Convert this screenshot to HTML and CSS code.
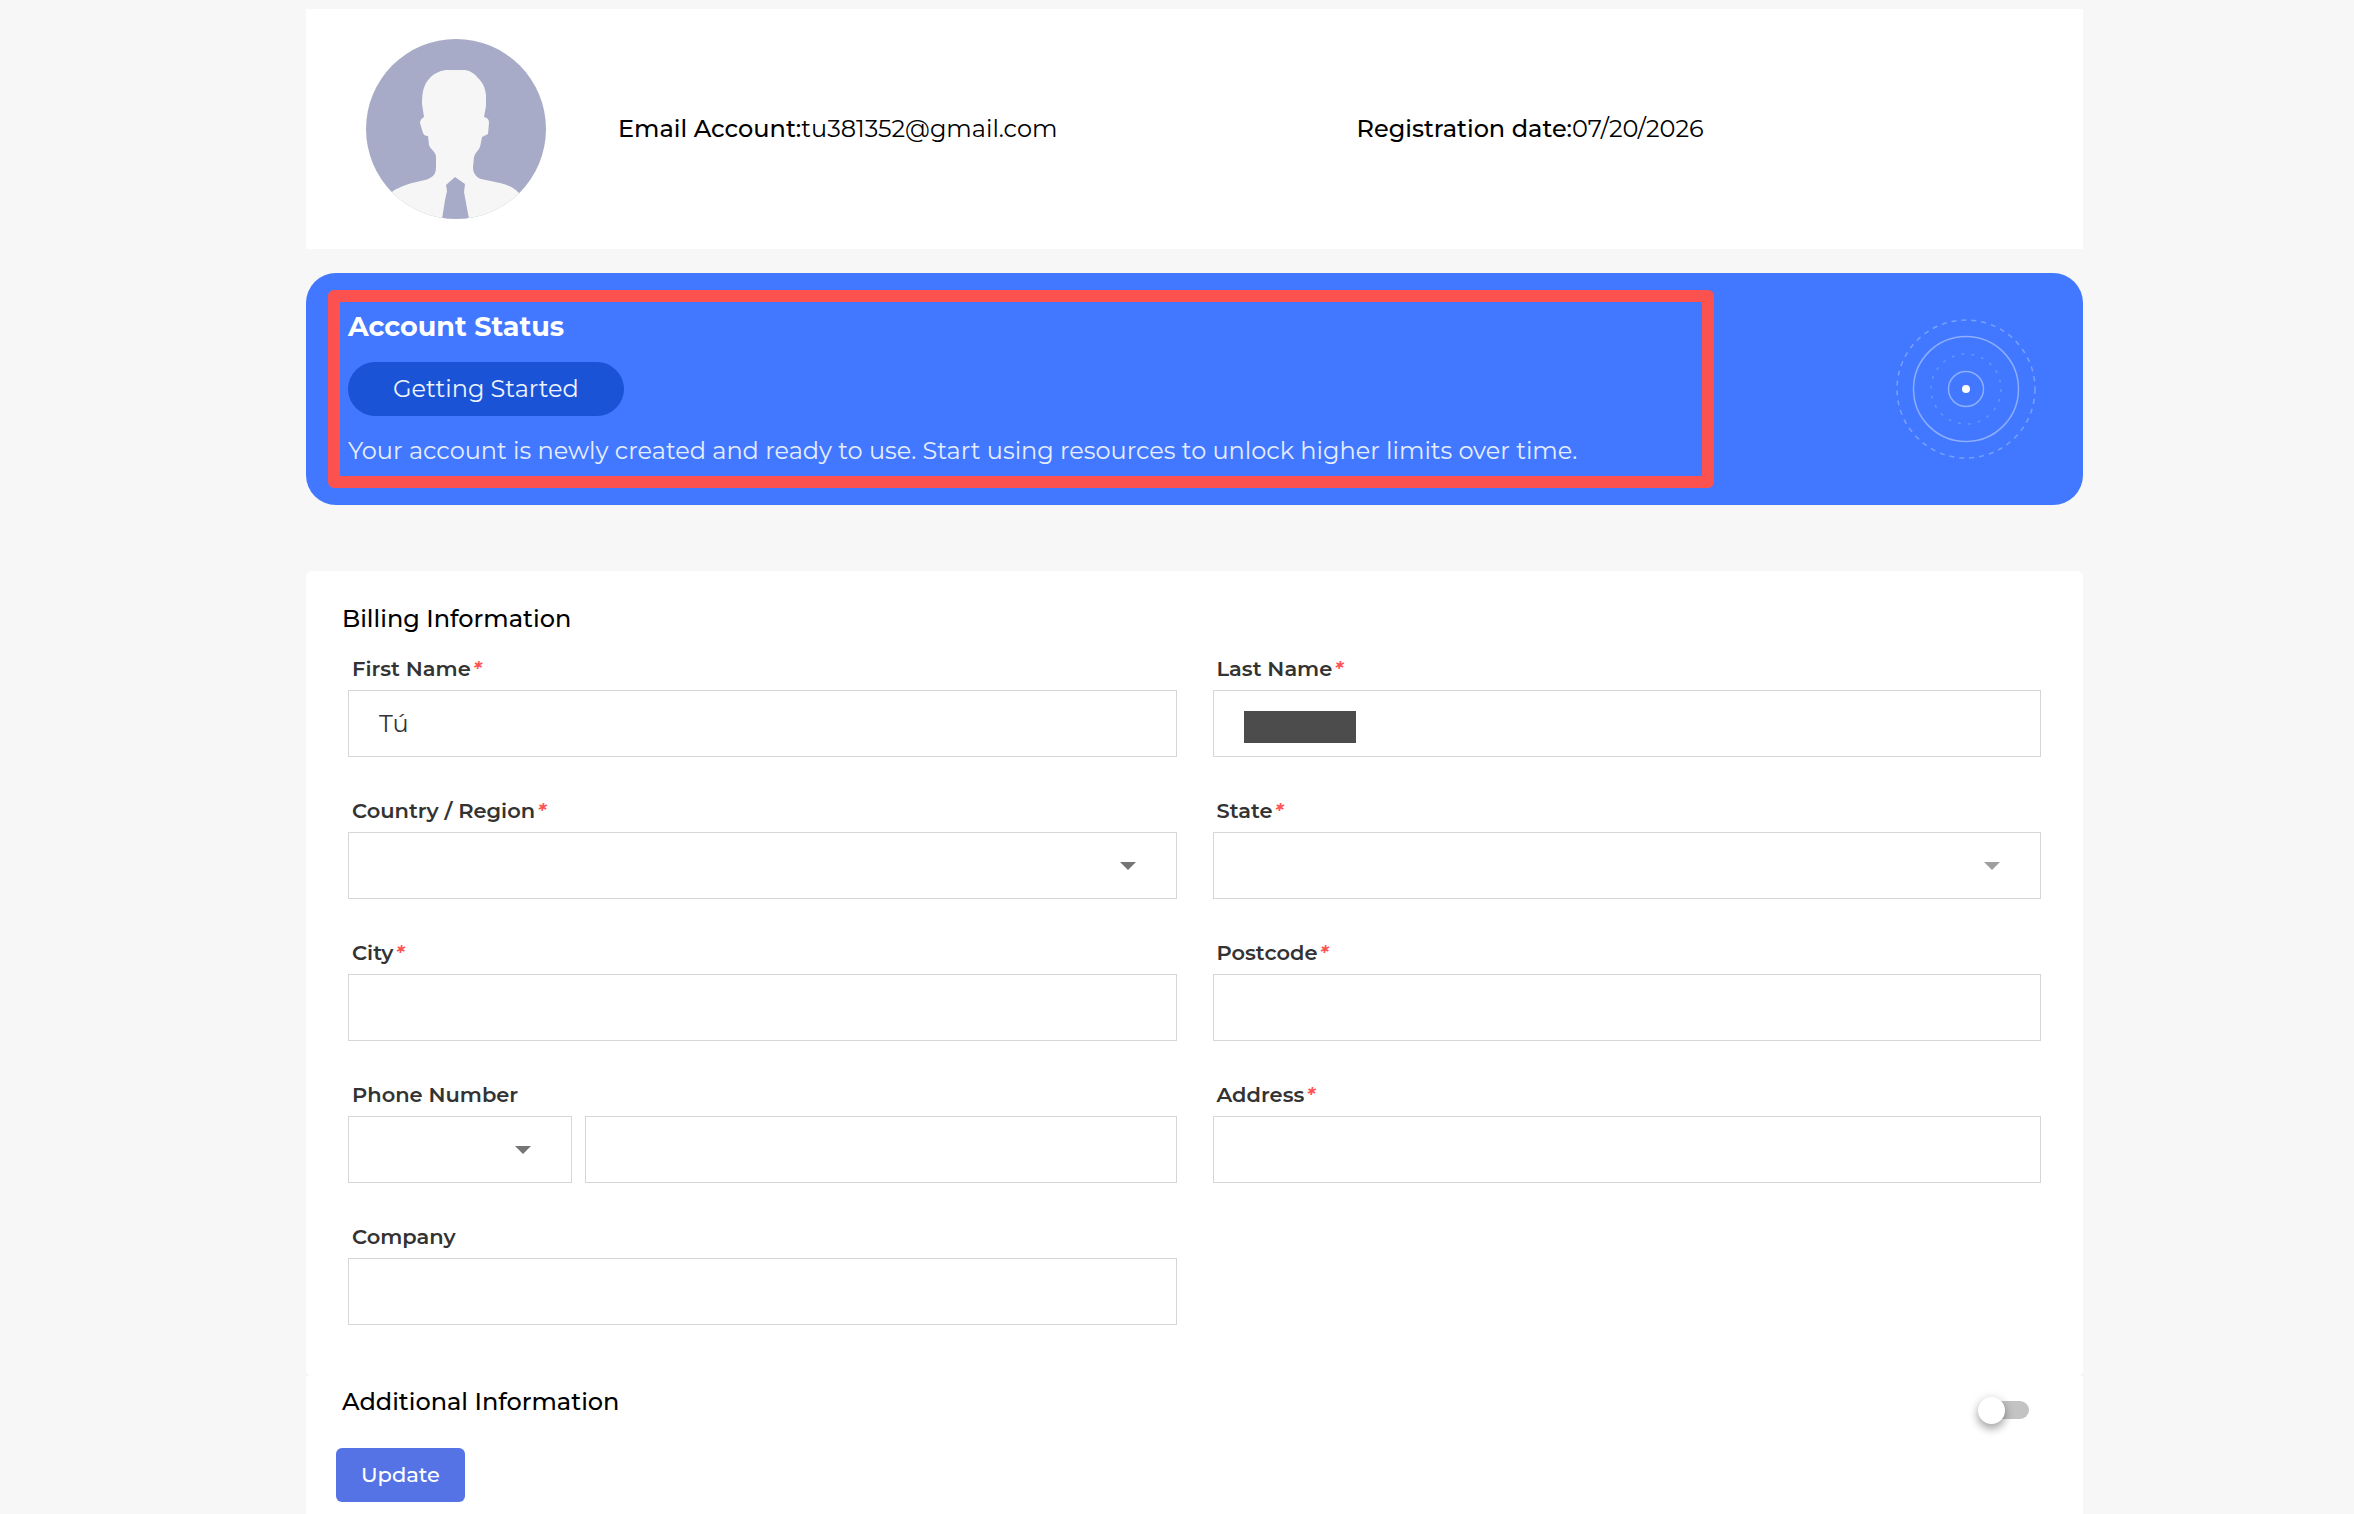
FILE: index.html
```html
<!DOCTYPE html>
<html lang="en">
<head>
    <meta charset="UTF-8">
    <meta name="viewport" content="width=device-width, initial-scale=1.0">
    <title>Account Profile</title>
    <link rel="stylesheet" href="styles.css">
</head>
<body>
    <main class="page">
        <section class="profile">
            <svg class="avatar" viewBox="0 0 180 180" role="img" aria-label="Avatar">
                <clipPath id="avatarClip"><circle cx="90" cy="90" r="90"/></clipPath>
                <g clip-path="url(#avatarClip)">
                    <rect width="180" height="180" fill="#a8abc7"/>
                    <path fill="#f6f6f6" d="M80 31H99C105 32 109 35 112 39C117 44 119 48 120 56L120 67L118 78C122 79 123 81 123 84L122 95L116 98L114 108C112 112 109 114 108 118L107 128C107 134 110 138 115 140L134 144C142 146 148 149 152 153L180 180H0L26 153C31 149 37 147 46 144L59 141C67 139 70 135 70 128V117C69 112 65 111 63 106L62 97C59 97 58 96 57 94L54 84C54 81 56 79 58 78L56 65C56 52 58 45 64 39C67 35 73 32 80 31Z"/>
                    <path fill="#a8abc7" d="M89 138L99 145L98 153L103 180H76L79 161L81 152L80 146Z"/>
                </g>
            </svg>
            <div class="profile-info">
                <p><span class="info-label">Email Account:</span>tu381352@gmail.com</p>
                <p><span class="info-label">Registration date:</span>07/20/2026</p>
            </div>
        </section>

        <section class="status">
            <div class="status-text">
                <h2>Account Status</h2>
                <span class="badge">Getting Started</span>
                <p>Your account is newly created and ready to use. Start using resources to unlock higher limits over time.</p>
            </div>
            <svg class="radar" viewBox="-72 -72 144 144" fill="none" stroke="#fff" aria-hidden="true">
                <circle r="69" stroke-opacity="0.3" stroke-width="1.5" stroke-dasharray="5 5"/>
                <circle r="52.5" stroke-opacity="0.4" stroke-width="1.5"/>
                <circle r="35" stroke-opacity="0.2" stroke-width="1.5" stroke-dasharray="3 7"/>
                <circle r="17.5" stroke-opacity="0.4" stroke-width="1.5"/>
                <circle r="4" fill="#fff" stroke="none"/>
            </svg>
            <div class="highlight"></div>
        </section>

        <form>
            <section class="billing">
                <h3>Billing Information</h3>
                <div class="fields">
                    <div class="field">
                        <label for="firstName">First Name<em>*</em></label>
                        <input type="text" id="firstName" value="Tú">
                    </div>
                    <div class="field">
                        <label for="lastName">Last Name<em>*</em></label>
                        <div class="control">
                            <input type="text" id="lastName">
                            <span class="mask"></span>
                        </div>
                    </div>
                    <div class="field">
                        <label for="country">Country / Region<em>*</em></label>
                        <div class="control select">
                            <select id="country"><option></option></select>
                        </div>
                    </div>
                    <div class="field">
                        <label for="state">State<em>*</em></label>
                        <div class="control select disabled">
                            <select id="state" disabled><option></option></select>
                        </div>
                    </div>
                    <div class="field">
                        <label for="city">City<em>*</em></label>
                        <input type="text" id="city">
                    </div>
                    <div class="field">
                        <label for="postcode">Postcode<em>*</em></label>
                        <input type="text" id="postcode">
                    </div>
                    <div class="field">
                        <label for="phone">Phone Number</label>
                        <div class="phone">
                            <div class="control select">
                                <select aria-label="Phone code"><option></option></select>
                            </div>
                            <input type="tel" id="phone">
                        </div>
                    </div>
                    <div class="field">
                        <label for="address">Address<em>*</em></label>
                        <input type="text" id="address">
                    </div>
                    <div class="field">
                        <label for="company">Company</label>
                        <input type="text" id="company">
                    </div>
                </div>
            </section>

            <section class="additional">
                <div class="additional-head">
                    <h3><label for="additional">Additional Information</label></h3>
                    <input type="checkbox" class="toggle" id="additional">
                </div>
                <button type="button">Update</button>
            </section>
        </form>
    </main>
</body>
</html>
```

FILE: styles.css
```css
* {
    box-sizing: border-box;
}

body {
    margin: 0;
    background-color: #f7f7f7;
    font-family: Montserrat, Inter, sans-serif;
    font-size: 24px;
    line-height: 30px;
    color: #000;
}

h2, h3, p {
    margin: 0;
}

.page {
    padding: 9px 271px 0 306px;
}

.profile {
    display: flex;
    align-items: center;
    gap: 72px;
    padding: 30px 0 30px 60px;
    background-color: #fff;
}

.avatar {
    width: 180px;
    height: 180px;
    flex-shrink: 0;
}

.profile-info {
    flex: 1;
    display: grid;
    grid-template-columns: 1fr 1fr;
    gap: 12px;
}

.info-label {
    font-weight: 500;
}

.status {
    position: relative;
    display: flex;
    justify-content: space-between;
    align-items: center;
    margin-top: 24px;
    padding: 38px 45px 39px 42px;
    border-radius: 30px;
    background-color: #4178ff;
    color: #fff;
}

.status h2 {
    font-size: 27px;
    line-height: 32px;
    font-weight: 700;
}

.badge {
    display: inline-block;
    margin: 19px 0 20px;
    padding: 12px 45px;
    border-radius: 27px;
    background-color: #1b53d7;
    color: #eef3ff;
}

.status-text p {
    color: #e6edff;
}

.radar {
    width: 144px;
    height: 144px;
    flex-shrink: 0;
}

/* red frame around the status text */
.highlight {
    position: absolute;
    top: 17px;
    bottom: 17px;
    left: 22px;
    width: 78%;
    border: 12px solid #fb5250;
    border-radius: 6px;
}

h3 {
    font-size: 24px;
    font-weight: 500;
}

.billing {
    margin-top: 66px;
    padding: 33px 42px 51px;
    border-radius: 6px;
    background-color: #fff;
}

.billing h3 {
    margin: 0 0 20px -6px;
}

.fields {
    display: grid;
    grid-template-columns: 1fr 1fr;
    gap: 39px 36px;
}

.field {
    display: flex;
    flex-direction: column;
    gap: 6px;
}

.field label {
    padding-left: 4px;
    font-size: 21px;
    font-weight: 600;
    color: #333;
}

.field em {
    padding-left: 2px;
    color: #ff5252;
}

.field input,
.field select {
    display: block;
    width: 100%;
    height: 67px;
    padding: 0 30px;
    border: 1px solid #d6d6d6;
    border-radius: 0;
    background-color: #fff;
    font: inherit;
    color: #333;
    opacity: 1;
    appearance: none;
}

.control {
    position: relative;
}

.select::after {
    content: "";
    position: absolute;
    top: 30px;
    right: 41px;
    border: 8px solid transparent;
    border-top-color: #757575;
    border-bottom: 0;
    pointer-events: none;
}

.select.disabled::after {
    border-top-color: #9e9e9e;
}

.mask {
    position: absolute;
    top: 21px;
    left: 31px;
    width: 112px;
    height: 32px;
    background-color: #4c4c4c;
}

.phone {
    display: grid;
    grid-template-columns: 224px 1fr;
    gap: 13px;
}

.additional {
    padding: 11px 54px 30px 30px;
    background-color: #fff;
}

.additional-head {
    display: flex;
    justify-content: space-between;
    align-items: flex-start;
    padding-left: 6px;
    margin-bottom: 16px;
    height: 45px;
}

.toggle {
    position: relative;
    width: 48px;
    height: 18px;
    margin: 14px 0 0;
    border-radius: 9px;
    background-color: #c3c3c3;
    appearance: none;
}

.toggle::before {
    content: "";
    position: absolute;
    top: -4px;
    left: -3px;
    width: 27px;
    height: 27px;
    border-radius: 50%;
    background-color: #fff;
    box-shadow: 0 5px 8px rgba(0, 0, 0, 0.3), 0 1px 12px rgba(0, 0, 0, 0.12);
}

.toggle:checked {
    background-color: #a9b8f3;
}

.toggle:checked::before {
    left: 24px;
    background-color: #5673e6;
}

button {
    height: 54px;
    padding: 0 25px;
    border: none;
    border-radius: 6px;
    background-color: #5673e6;
    font: inherit;
    font-size: 21px;
    font-weight: 500;
    color: #fff;
    cursor: pointer;
}
```
